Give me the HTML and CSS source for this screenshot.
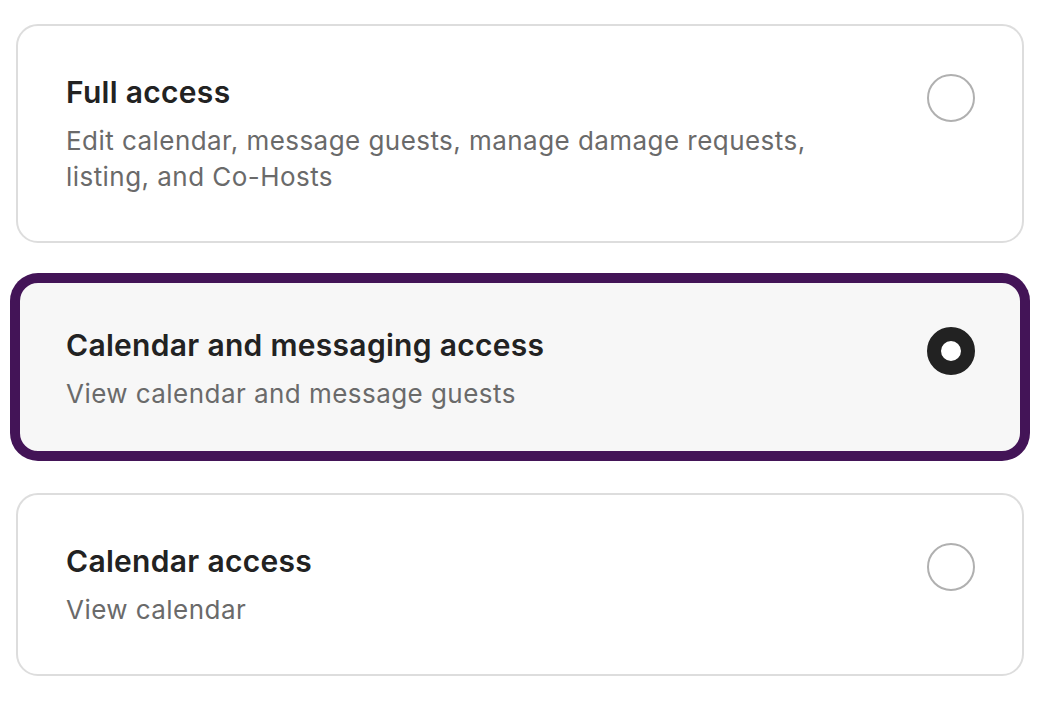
FILE: index.html
```html
<!DOCTYPE html>
<html lang="en">
<head>
<meta charset="utf-8">
<title>Co-Host access</title>
<link rel="stylesheet" href="styles.css">
</head>
<body>
<div class="options">
  <div class="card">
    <div class="text">
      <div class="title">Full access</div>
      <div class="desc">Edit calendar, message guests, manage damage requests, listing, and Co-Hosts</div>
    </div>
    <span class="radio"></span>
  </div>
  <div class="card selected">
    <div class="text">
      <div class="title">Calendar and messaging access</div>
      <div class="desc">View calendar and message guests</div>
    </div>
    <span class="radio checked"></span>
  </div>
  <div class="card">
    <div class="text">
      <div class="title">Calendar access</div>
      <div class="desc">View calendar</div>
    </div>
    <span class="radio"></span>
  </div>
</div>
</body>
</html>
```

FILE: styles.css
```css
html, body {
  margin: 0;
  padding: 0;
  background: #ffffff;
}

body {
  font-family: Inter, "Noto Sans", "Liberation Sans", sans-serif;
  color: #222222;
}

.options {
  display: flex;
  flex-direction: column;
  gap: 36px;
  padding: 24px 32px 0 16px;
}

.card {
  display: flex;
  align-items: flex-start;
  gap: 48px;
  box-sizing: border-box;
  border: 2px solid #dddddd;
  border-radius: 22px;
  padding: 48px 47px 46px 48px;
  background: #ffffff;
}

.card.selected {
  background: #f7f7f7;
  border: 4px solid #431457;
  box-shadow: 0 0 0 6px #431457;
  padding: 44px 45px 39px 46px;
  margin-bottom: 2px;
}

.text {
  flex: 1;
  min-width: 0;
}

.title {
  font-size: 30px;
  line-height: 36px;
  font-weight: 600;
  color: #222222;
  letter-spacing: 0.3px;
}

.desc {
  margin-top: 13px;
  font-size: 26px;
  line-height: 36px;
  font-weight: 400;
  color: #6a6a6a;
  letter-spacing: 0.45px;
}

.radio {
  flex: none;
  box-sizing: border-box;
  width: 48px;
  height: 48px;
  border-radius: 50%;
  border: 2px solid #b0b0b0;
  background: #ffffff;
}

.radio.checked {
  border: 14px solid #222222;
  background: #ffffff;
}
```
